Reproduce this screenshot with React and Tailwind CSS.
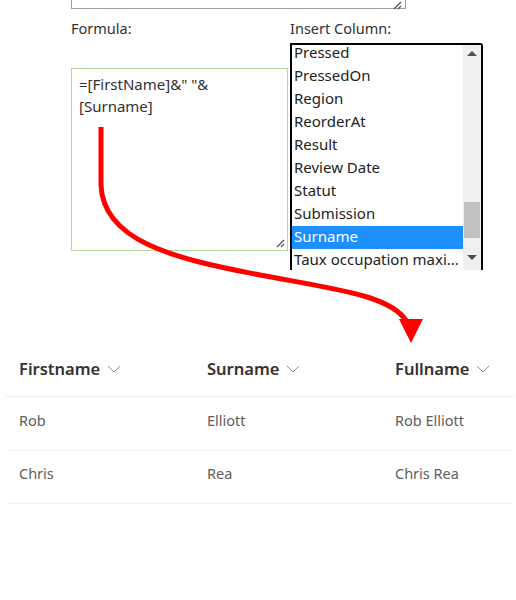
import React from "react";

const columns = [
  "Pressed",
  "PressedOn",
  "Region",
  "ReorderAt",
  "Result",
  "Review Date",
  "Statut",
  "Submission",
  "Surname",
  "Taux occupation maxi...",
];

const rows = [
  ["Rob", "Elliott", "Rob Elliott"],
  ["Chris", "Rea", "Chris Rea"],
];

const Grip = () => (
  <svg width="11" height="11" viewBox="0 0 11 11" className="text-[#555]">
    <path d="M10 3 L3 10 M10 7 L7 10" stroke="currentColor" strokeWidth="1.3" />
  </svg>
);

const Chevron = () => (
  <svg width="14" height="8" viewBox="0 0 14 8" className="text-[#8a8886]">
    <path d="M1 1 L7 7 L13 1" fill="none" stroke="currentColor" strokeWidth="1" />
  </svg>
);

export default function App() {
  return (
    <div className="relative w-[516px] h-[600px] bg-white overflow-hidden font-['Noto_Sans','Open_Sans',sans-serif]">
      {/* form part */}
      <div className="pl-[71px]">
        <div className="w-[335px] h-[9px] border-x border-b border-[#a19f9d] flex justify-end items-end pr-[3px]">
          <div className="-mb-[2px] -mt-[4px]">
            <Grip />
          </div>
        </div>

        <div className="flex">
          <div className="w-[219px] flex flex-col">
            <p className="mt-[9px] text-[14.5px] leading-[20px] text-[#323130]">Formula:</p>
            <div className="mt-[30px] w-[217px] h-[183px] border border-[#b5d99c] px-[7px] py-[4px] relative">
              <p className="text-[15px] leading-[22px] text-[#323130] w-[160px]">
                =[FirstName]&amp;" "&amp; [Surname]
              </p>
              <div className="absolute right-[2px] bottom-[2px]">
                <Grip />
              </div>
            </div>
          </div>

          <div className="flex flex-col">
            <p className="mt-[9px] text-[14.5px] leading-[20px] text-[#323130]">Insert Column:</p>
            <div className="mt-[5px] w-[193px] h-[227px] border-2 border-b-0 border-black rounded-tr-[3px] flex overflow-hidden">
              <div className="flex-1 -mt-[3px]">
                {columns.map((c) => (
                  <div
                    key={c}
                    className={
                      "h-[23px] pl-[2px] text-[15px] leading-[21px] whitespace-nowrap overflow-hidden " +
                      (c === "Surname" ? "bg-[#1e8fff] text-white" : "text-[#222]")
                    }
                  >
                    {c}
                  </div>
                ))}
              </div>
              <div className="w-[18px] bg-[#f0f0f0] flex flex-col items-center">
                <div className="mt-[6px] w-0 h-0 border-x-[5px] border-x-transparent border-b-[5px] border-b-[#505050]" />
                <div className="mt-[146px] w-[16px] h-[36px] bg-[#c1c1c1]" />
                <div className="mt-[17px] w-0 h-0 border-x-[5px] border-x-transparent border-t-[5px] border-t-[#505050]" />
              </div>
            </div>
          </div>
        </div>
      </div>

      {/* list view */}
      <div className="mt-[74px] mx-[6px] w-[508px]">
        <div className="h-[53px] flex border-b border-[#edebe9]">
          {["Firstname", "Surname", "Fullname"].map((h) => (
            <div key={h} className="w-[188px] shrink-0 pl-[13px] flex items-center gap-[7px] pb-[2px]">
              <span className="text-[16.5px] font-semibold text-[#323130]">{h}</span>
              <Chevron />
            </div>
          ))}
        </div>
        {rows.map((r) => (
          <div key={r[0]} className="h-[53.5px] flex border-b border-[#f3f2f1]">
            {r.map((v) => (
              <div key={v} className="w-[188px] shrink-0 pl-[13px] flex items-center pb-[5px] text-[14.5px] text-[#605e5c]">
                {v}
              </div>
            ))}
          </div>
        ))}
      </div>

      {/* red arrow overlay */}
      <svg className="absolute left-0 top-0 pointer-events-none" width="516" height="600" viewBox="0 0 516 600">
        <path
          d="M101 127 L101 185 C 103 240, 170 258, 260 275 C 340 290, 392 296, 407 322"
          fill="none"
          stroke="#ff0000"
          strokeWidth="5"
        />
        <path d="M399 319 L423 319 L411 343 Z" fill="#ff0000" />
      </svg>
    </div>
  );
}
